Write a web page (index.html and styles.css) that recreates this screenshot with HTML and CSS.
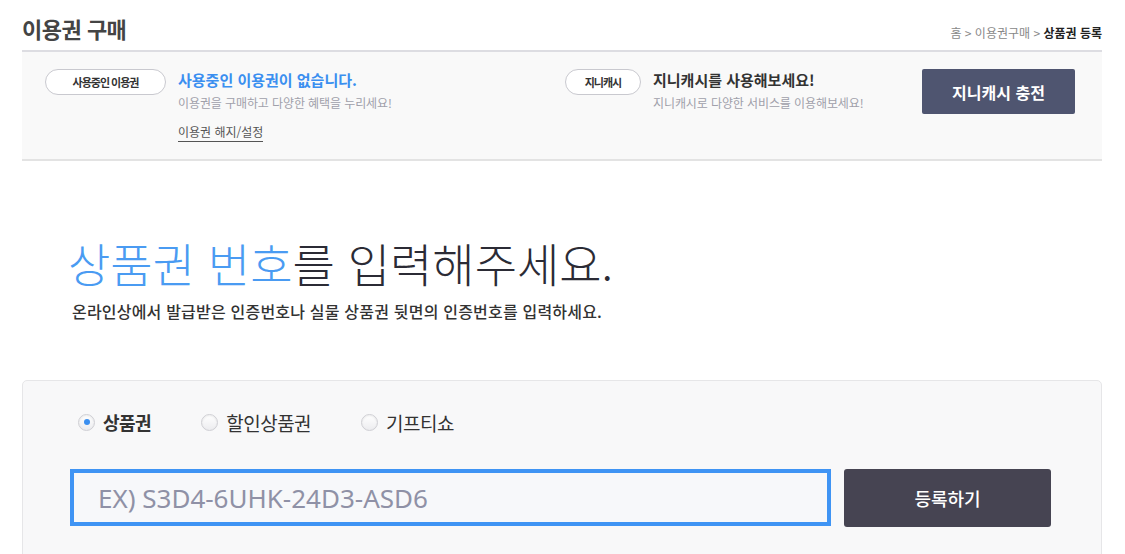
FILE: index.html
```html
<!DOCTYPE html>
<html lang="ko">
<head>
    <meta charset="UTF-8">
    <title>이용권 구매 - 상품권 등록</title>
    <link rel="stylesheet" href="styles.css">
</head>
<body>
    <div class="wrap">
        <div class="page-head">
            <h1>이용권 구매</h1>
            <p class="location">홈 &gt; 이용권구매 &gt; <strong>상품권 등록</strong></p>
        </div>

        <div class="my-ticket">
            <div class="ticket-col">
                <span class="pill pill-wide">사용중인 이용권</span>
                <div class="ticket-text">
                    <p class="ticket-title blue">사용중인 이용권이 없습니다.</p>
                    <p class="ticket-desc">이용권을 구매하고 다양한 혜택을 누리세요!</p>
                    <a href="#" class="ticket-link">이용권 해지/설정</a>
                </div>
            </div>
            <div class="ticket-col cash-col">
                <span class="pill pill-small">지니캐시</span>
                <div class="ticket-text">
                    <p class="ticket-title">지니캐시를 사용해보세요!</p>
                    <p class="ticket-desc">지니캐시로 다양한 서비스를 이용해보세요!</p>
                </div>
                <button type="button" class="btn-cash">지니캐시 충전</button>
            </div>
        </div>

        <div class="coupon-intro">
            <h2><span class="blue-light">상품권 번호</span>를 입력해주세요.</h2>
            <p>온라인상에서 발급받은 인증번호나 실물 상품권 뒷면의 인증번호를 입력하세요.</p>
        </div>

        <form class="coupon-box" onsubmit="return false;">
            <div class="radio-row">
                <label class="radio"><input type="radio" name="type" checked><span>상품권</span></label>
                <label class="radio"><input type="radio" name="type"><span>할인상품권</span></label>
                <label class="radio"><input type="radio" name="type"><span>기프티쇼</span></label>
            </div>
            <div class="input-row">
                <input type="text" class="coupon-input" placeholder="EX) S3D4-6UHK-24D3-ASD6">
                <button type="submit" class="btn-submit">등록하기</button>
            </div>
        </form>
    </div>
</body>
</html>
```

FILE: styles.css
```css
* {
    margin: 0;
    padding: 0;
    box-sizing: border-box;
}

body {
    font-family: "Noto Sans CJK KR", "Noto Sans", sans-serif;
    color: #333;
    background: #fff;
}

.wrap {
    width: 1080px;
    margin-left: 22px;
}

/* page title + breadcrumb */
.page-head {
    display: flex;
    justify-content: space-between;
    align-items: flex-end;
    height: 50px;
    padding-bottom: 10px;
}

h1 {
    font-size: 22px;
    font-weight: 700;
    color: #444;
    letter-spacing: -0.5px;
    line-height: 1;
    margin-bottom: 1px;
}

.location {
    font-size: 12px;
    color: #888;
    margin-bottom: -1px;
}

.location strong {
    color: #222;
}

/* my ticket box */
.my-ticket {
    display: flex;
    height: 111px;
    background: #f9f9f9;
    border-top: 2px solid #dddde2;
    border-bottom: 2px solid #e3e3e3;
    padding: 17px 27px 0 23px;
}

.ticket-col {
    display: flex;
    align-items: flex-start;
    width: 520px;
}

.cash-col {
    flex: 1;
}

.pill {
    display: flex;
    align-items: center;
    justify-content: center;
    height: 26px;
    margin-right: 12px;
    border: 1px solid #c9c9cf;
    border-radius: 13px;
    background: #fff;
    font-size: 11px;
    font-weight: 700;
    letter-spacing: -1px;
    color: #333;
    flex-shrink: 0;
}

.pill-wide {
    width: 121px;
}

.pill-small {
    width: 76px;
}

.ticket-title {
    font-size: 15px;
    font-weight: 700;
    line-height: 22px;
    color: #333;
}

.ticket-title.blue {
    color: #3b8ff0;
}

.ticket-desc {
    margin-top: 3px;
    font-size: 12px;
    color: #a0a0aa;
    letter-spacing: -0.1px;
    line-height: 18px;
}

.ticket-link {
    display: inline-block;
    margin-top: 12px;
    font-size: 12px;
    color: #555;
    text-decoration: none;
    border-bottom: 1px solid #555;
    line-height: 16px;
    padding-bottom: 1px;
}

.btn-cash {
    margin-left: auto;
    width: 153px;
    height: 45px;
    border: none;
    border-radius: 2px;
    background: #4f5570;
    color: #fff;
    font-family: inherit;
    font-size: 16px;
    font-weight: 700;
    cursor: pointer;
}

/* intro heading */
.coupon-intro {
    padding: 71px 0 0 46px;
    height: 219px;
}

.coupon-intro h2 {
    font-size: 46px;
    font-weight: 300;
    color: #2b2b35;
    line-height: 60px;
}

.blue-light {
    color: #4a9bf2;
}

.coupon-intro p {
    margin-top: 7px;
    margin-left: 4px;
    font-size: 16px;
    font-weight: 500;
    color: #333;
    letter-spacing: 0.2px;
}

/* coupon form */
.coupon-box {
    background: #f8f8f9;
    border: 1px solid #e6e6e8;
    border-radius: 5px;
    padding: 29px 50px 40px 47px;
    height: 200px;
}

.radio-row {
    display: flex;
    padding-left: 8px;
    gap: 50px;
    height: 59px;
}

.radio {
    display: flex;
    align-items: center;
    height: 24px;
    cursor: pointer;
}

.radio input {
    appearance: none;
    -webkit-appearance: none;
    width: 17px;
    height: 17px;
    margin-right: 8px;
    border: 1px solid #cfcfd4;
    border-radius: 50%;
    background: linear-gradient(#fff, #ececef);
    box-shadow: inset 0 1px 2px rgba(0,0,0,0.08);
    display: grid;
    place-items: center;
}

.radio input:checked::after {
    content: "";
    width: 6px;
    height: 6px;
    border-radius: 50%;
    background: #3b8ff0;
}

.radio span {
    font-size: 19px;
    color: #333;
    letter-spacing: -0.5px;
}

.radio input:checked + span {
    font-weight: 700;
    font-size: 18px;
}

.input-row {
    display: flex;
    gap: 13px;
}

.coupon-input {
    width: 761px;
    height: 57px;
    border: 4px solid #3f94f4;
    background: #f7f8fa;
    padding: 0 24px;
    font-family: "Noto Sans", sans-serif;
    font-size: 26px;
    color: #333;
    outline: none;
}

.coupon-input::placeholder {
    color: #8f91a6;
}

.btn-submit {
    width: 207px;
    height: 58px;
    border: none;
    border-radius: 3px;
    background: #464452;
    color: #fff;
    font-family: inherit;
    font-size: 18px;
    font-weight: 500;
    cursor: pointer;
}
```
